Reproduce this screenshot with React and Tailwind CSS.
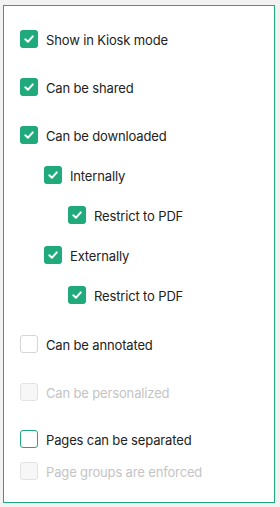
import React from "react";

const Check = ({ checked, disabled, focused }) => {
  if (checked) {
    return (
      <span className="flex h-[18px] w-[18px] shrink-0 items-center justify-center rounded-[3px] bg-[#20a97b]">
        <svg width="12" height="12" viewBox="0 0 12 12" fill="none">
          <path
            d="M2.3 6.2 L4.9 8.7 L9.8 3.4"
            stroke="white"
            strokeWidth="2"
            strokeLinecap="round"
            strokeLinejoin="round"
          />
        </svg>
      </span>
    );
  }
  return (
    <span
      className={
        disabled
          ? "h-[18px] w-[18px] shrink-0 rounded-[3px] border border-[#e3e3e3] bg-[#f7f7f7]"
          : focused
          ? "h-[18px] w-[18px] shrink-0 rounded-[3px] border border-[#20a97b] bg-white"
          : "h-[18px] w-[18px] shrink-0 rounded-[3px] border border-[#d6d6d6] bg-white"
      }
    />
  );
};

const options = [
  { label: "Show in Kiosk mode", checked: true, mt: "mt-0", indent: "pl-0" },
  { label: "Can be shared", checked: true, mt: "mt-[30px]", indent: "pl-0" },
  { label: "Can be downloaded", checked: true, mt: "mt-[30px]", indent: "pl-0" },
  { label: "Internally", checked: true, mt: "mt-[22px]", indent: "pl-[24px]" },
  { label: "Restrict to PDF", checked: true, mt: "mt-[22px]", indent: "pl-[48px]" },
  { label: "Externally", checked: true, mt: "mt-[22px]", indent: "pl-[24px]" },
  { label: "Restrict to PDF", checked: true, mt: "mt-[22px]", indent: "pl-[48px]" },
  { label: "Can be annotated", mt: "mt-[31px]", indent: "pl-0" },
  { label: "Can be personalized", disabled: true, mt: "mt-[30px]", indent: "pl-0" },
  { label: "Pages can be separated", focused: true, mt: "mt-[29px]", indent: "pl-0" },
  { label: "Page groups are enforced", disabled: true, mt: "mt-[14px]", indent: "pl-0" },
];

export default function App() {
  return (
    <div className="h-[507px] w-[280px] bg-[#f2f2f2] pl-[3px] pt-[5px] font-['Inter',sans-serif]">
      <div className="flex h-[498px] w-[272px] flex-col border border-[#20a97b] bg-white pl-[16px] pt-[24px]">
        {options.map((opt, index) => (
          <label
            key={`opt-${index}`}
            className={`flex h-[18px] items-center gap-[8px] ${opt.mt} ${opt.indent}`}
          >
            <Check checked={opt.checked} disabled={opt.disabled} focused={opt.focused} />
            <span
              className={
                opt.disabled
                  ? "pt-[2px] text-[13px] leading-[18px] tracking-[-0.15px] text-[#c4c4c4]"
                  : "pt-[2px] text-[13px] leading-[18px] tracking-[-0.15px] text-[#222222]"
              }
            >
              {opt.label}
            </span>
          </label>
        ))}
      </div>
    </div>
  );
}
